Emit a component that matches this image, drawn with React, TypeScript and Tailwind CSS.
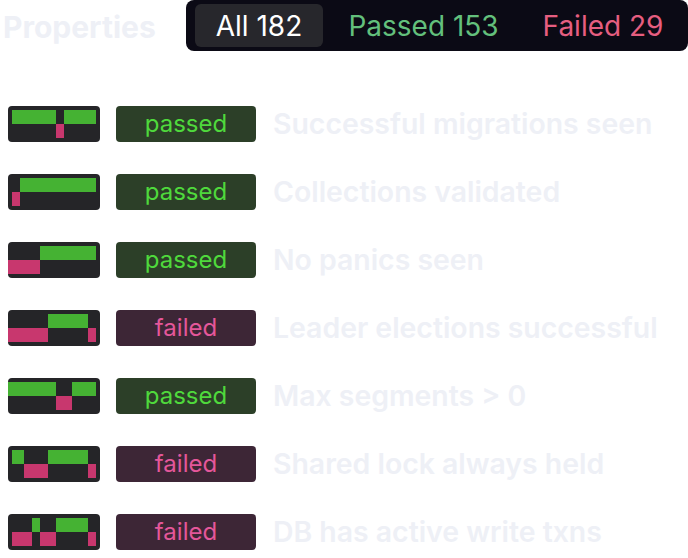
import React from "react";

type Seg = { row: 0 | 1; from: number; to: number };

const G = "#45b233";
const P = "#c8376e";

const rows: { segs: Seg[]; passed: boolean; label: string }[] = [
  {
    segs: [
      { row: 0, from: 4, to: 48 },
      { row: 1, from: 48, to: 56 },
      { row: 0, from: 56, to: 88 },
    ],
    passed: true,
    label: "Successful migrations seen",
  },
  {
    segs: [
      { row: 1, from: 4, to: 12 },
      { row: 0, from: 12, to: 88 },
    ],
    passed: true,
    label: "Collections validated",
  },
  {
    segs: [
      { row: 1, from: 0, to: 32 },
      { row: 0, from: 32, to: 88 },
    ],
    passed: true,
    label: "No panics seen",
  },
  {
    segs: [
      { row: 1, from: 0, to: 40 },
      { row: 0, from: 40, to: 80 },
      { row: 1, from: 80, to: 88 },
    ],
    passed: false,
    label: "Leader elections successful",
  },
  {
    segs: [
      { row: 0, from: 0, to: 48 },
      { row: 1, from: 48, to: 64 },
      { row: 0, from: 64, to: 88 },
    ],
    passed: true,
    label: "Max segments > 0",
  },
  {
    segs: [
      { row: 0, from: 4, to: 16 },
      { row: 1, from: 16, to: 40 },
      { row: 0, from: 40, to: 80 },
      { row: 1, from: 80, to: 88 },
    ],
    passed: false,
    label: "Shared lock always held",
  },
  {
    segs: [
      { row: 1, from: 4, to: 24 },
      { row: 0, from: 24, to: 32 },
      { row: 1, from: 32, to: 48 },
      { row: 0, from: 48, to: 80 },
      { row: 1, from: 80, to: 88 },
    ],
    passed: false,
    label: "DB has active write txns",
  },
];

function Timeline({ segs }: { segs: Seg[] }) {
  return (
    <svg width="92" height="36" viewBox="0 0 92 36" className="shrink-0 block">
      <rect x="0" y="0" width="92" height="36" rx="4" fill="#252528" />
      {segs.map((s, i) => (
        <rect
          key={i}
          x={s.from}
          y={s.row === 0 ? 4 : 18}
          width={s.to - s.from}
          height={14}
          fill={s.row === 0 ? G : P}
        />
      ))}
    </svg>
  );
}

export default function App() {
  return (
    <div
      className="w-[688px] h-[558px] bg-white overflow-hidden pl-2"
      style={{ fontFamily: "Inter, 'Noto Sans', sans-serif" }}
    >
      <div className="flex items-center h-[51px]">
        <div className="-ml-[5px] w-[183px] text-[30px] font-bold text-[#eef0f6] leading-none pt-[2px]">
          Properties
        </div>
        <div className="flex-1 h-[51px] bg-[#0b0a15] rounded-lg flex items-center pl-[9px] text-[28px] leading-none">
          <div className="w-[128px] h-[43px] bg-[#27272c] rounded-md flex items-center justify-center text-white">
            All 182
          </div>
          <div className="w-[201px] h-[43px] flex items-center justify-center text-[#63c07c]">
            Passed 153
          </div>
          <div className="w-[158px] h-[43px] flex items-center justify-center text-[#e65e80]">
            Failed 29
          </div>
        </div>
      </div>
      <div className="mt-[55px] flex flex-col gap-[32px]">
        {rows.map((r, i) => (
          <div key={i} className="flex items-center h-[36px]">
            <Timeline segs={r.segs} />
            <div
              className={
                r.passed
                  ? "ml-4 w-[140px] h-[36px] rounded-[4px] bg-[#2c3f28] text-[#4fd93c] flex items-center justify-center text-[24px] leading-none pb-[1px]"
                  : "ml-4 w-[140px] h-[36px] rounded-[4px] bg-[#3d2636] text-[#e4579a] flex items-center justify-center text-[24px] leading-none pb-[1px]"
              }
            >
              {r.passed ? "passed" : "failed"}
            </div>
            <div className="ml-[17px] text-[28.4px] font-semibold text-[#eef0f6] leading-[36px] whitespace-nowrap">
              {r.label}
            </div>
          </div>
        ))}
      </div>
    </div>
  );
}
